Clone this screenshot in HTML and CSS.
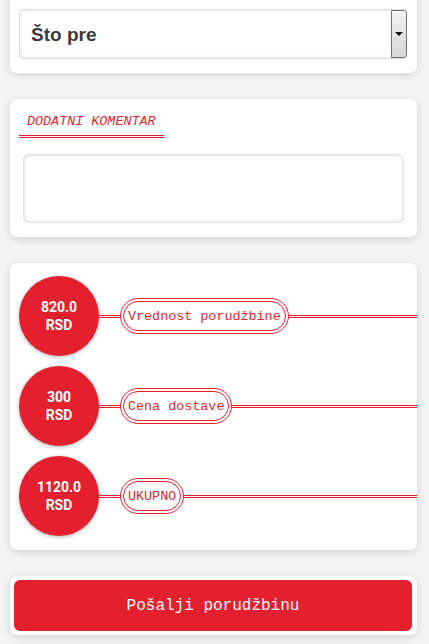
FILE: index.html
```html
<!DOCTYPE html>
<html lang="sr">
<head>
  <meta charset="UTF-8">
  <meta name="viewport" content="width=device-width, initial-scale=1.0">
  <title>Porudžbina</title>
  <link rel="stylesheet" href="styles.css">
</head>
<body>
  <div class="page">
    <div class="card card-first">
      <div class="select">
        <select id="vreme">
          <option>Što pre</option>
        </select>
        <span class="select-btn"><span class="arrow"></span></span>
      </div>
    </div>

    <div class="card card-comment">
      <div class="title">DODATNI KOMENTAR</div>
      <textarea class="comment" id="komentar"></textarea>
    </div>

    <div class="card card-sum">
      <div class="row">
        <div class="circle">820.0<br>RSD</div>
        <div class="link"></div>
        <div class="pill">Vrednost porudžbine</div>
        <div class="line"></div>
      </div>
      <div class="row">
        <div class="circle">300<br>RSD</div>
        <div class="link"></div>
        <div class="pill">Cena dostave</div>
        <div class="line"></div>
      </div>
      <div class="row">
        <div class="circle">1120.0<br>RSD</div>
        <div class="link"></div>
        <div class="pill">UKUPNO</div>
        <div class="line"></div>
      </div>
    </div>

    <div class="card card-send">
      <button class="send-btn">Pošalji porudžbinu</button>
    </div>
  </div>
</body>
</html>
```

FILE: styles.css
```css
body {
  margin: 0;
  background: #f4f4f4;
  font-family: 'Liberation Sans', Arial, sans-serif;
  overflow: hidden;
}
.page {
  padding: 0 12px 0 10px;
}
.card {
  background: #fff;
  border-radius: 7px;
  box-shadow: 0 2px 8px rgba(0, 0, 0, 0.14);
  margin-bottom: 26px;
}
.card-first {
  margin-top: -12px;
  padding: 21px 10px 14px 9px;
}
.select {
  display: flex;
  height: 50px;
  box-sizing: border-box;
  border: 1px solid #dcdcdc;
  border-right: none;
  border-radius: 4px;
  box-shadow: inset 0 0 4px rgba(0, 0, 0, 0.12);
  overflow: hidden;
}
.select select {
  flex: 1;
  appearance: none;
  -webkit-appearance: none;
  border: none;
  background: transparent;
  font-family: 'Liberation Sans', Arial, sans-serif;
  font-size: 19px;
  font-weight: bold;
  color: #3b3b3b;
  padding: 0 11px;
  outline: none;
}
.select-btn {
  width: 14px;
  border: 1px solid #707070;
  border-radius: 0 3px 3px 0;
  background: linear-gradient(#f2f2f2, #d6d6d6);
  display: flex;
  align-items: center;
  justify-content: center;
}
.arrow {
  width: 0;
  height: 0;
  border-left: 4px solid transparent;
  border-right: 4px solid transparent;
  border-top: 4px solid #111;
}
.card-comment {
  padding: 12px 13px 14px 13px;
}
.title {
  display: inline-block;
  margin-left: -4px;
  padding: 0 8px 2px 8px;
  border-bottom: 3px double #e41f2e;
  font-family: 'Liberation Mono', 'Courier New', monospace;
  font-style: italic;
  font-size: 13.4px;
  line-height: 22px;
  color: #e41f2e;
}
.comment {
  display: block;
  width: 100%;
  box-sizing: border-box;
  height: 69px;
  margin-top: 16px;
  border: 1px solid #e2e2e2;
  border-radius: 5px;
  box-shadow: inset 0 0 4px rgba(0, 0, 0, 0.14);
  resize: none;
  outline: none;
}
.card-sum {
  padding: 13px 0 14px 9px;
}
.row {
  display: flex;
  align-items: center;
  margin-bottom: 10px;
}
.row:last-child {
  margin-bottom: 0;
}
.circle {
  width: 80px;
  height: 80px;
  border-radius: 50%;
  background: #e41f2e;
  box-shadow: 0 1px 4px rgba(0, 0, 0, 0.3);
  color: #fff;
  font-family: Roboto, 'Liberation Sans', sans-serif;
  font-weight: bold;
  font-size: 14px;
  line-height: 18px;
  display: flex;
  align-items: center;
  justify-content: center;
  text-align: center;
  flex-shrink: 0;
}
.link,
.line {
  height: 3px;
  background: linear-gradient(#e41f2e 0 1px, #fff 1px 2px, #e41f2e 2px 3px);
}
.link {
  width: 21px;
}
.line {
  flex: 1;
}
.pill {
  height: 36px;
  box-sizing: border-box;
  border: 4px double #e41f2e;
  border-radius: 18px;
  padding: 0 4px;
  display: flex;
  align-items: center;
  font-family: 'Liberation Mono', 'Courier New', monospace;
  font-size: 13.4px;
  color: #e41f2e;
  white-space: nowrap;
}
.card-send {
  padding: 4px 5px 4px 4px;
}
.send-btn {
  display: block;
  width: 100%;
  height: 51px;
  border: none;
  border-radius: 6px;
  background: #e41f2e;
  color: #fff;
  font-family: 'Liberation Mono', 'Courier New', monospace;
  font-size: 16px;
  cursor: pointer;
}
```
